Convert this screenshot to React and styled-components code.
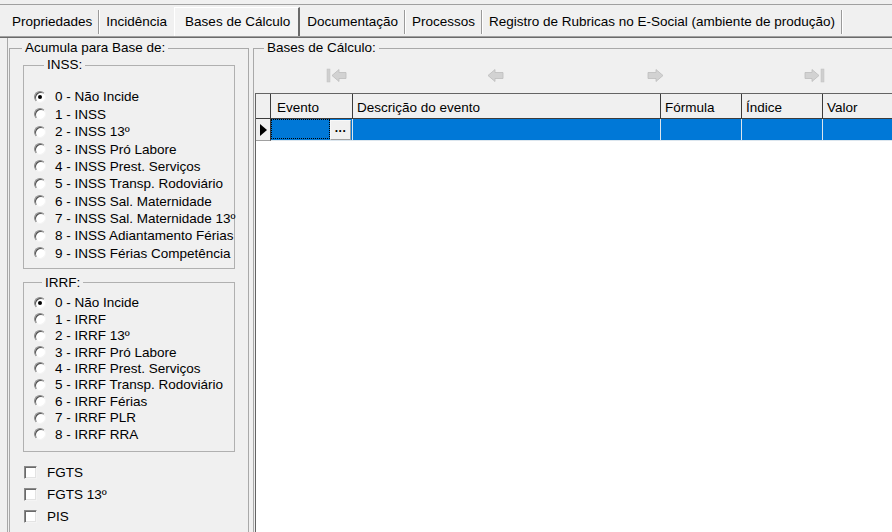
import React from 'react';
import styled, { createGlobalStyle } from 'styled-components';

const Global = createGlobalStyle`
  html, body { margin: 0; padding: 0; background: #f0f0f0; overflow: hidden; }
  body { font-family: "Liberation Sans", Arial, sans-serif; font-size: 13.5px; color: #000; }
  #root { width: 892px; height: 532px; overflow: hidden; }
  * { box-sizing: border-box; }
`;

const Page = styled.div`
  width: 892px;
  height: 532px;
  display: flex;
  flex-direction: column;
  background: #f0f0f0;
  overflow: hidden;
`;

const TopStrip = styled.div`
  height: 5px;
  flex: none;
  border-bottom: 1px solid #a0a0a0;
`;

const TabRow = styled.div`
  display: flex;
  height: 31px;
  flex: none;
  padding: 2px 0 0 5px;
  align-items: stretch;
`;

const Tab = styled.div`
  position: relative;
  display: flex;
  align-items: center;
  white-space: nowrap;
  line-height: 16px;
  padding: ${p => (p.$active ? '0 8px 0 10px' : '0 7px')};
  background: ${p => (p.$active ? '#f3f3f3' : 'transparent')};
  border-top: ${p => (p.$active ? '1px solid #ffffff' : '1px solid transparent')};
  border-left: ${p => (p.$active ? '1px solid #ffffff' : '0')};
  border-right: ${p => (p.$active ? '2px solid #6a6a6a' : '0')};
  &::after {
    content: '';
    display: ${p => (p.$active || p.$noSep ? 'none' : 'block')};
    position: absolute;
    right: 0;
    top: 2px;
    bottom: 2px;
    width: 1px;
    background: #9a9a9a;
    box-shadow: 1px 0 0 #ffffff;
  }
`;

const TabLine = styled.div`
  flex: none;
  height: 2px;
  border-top: 1px solid #a0a0a0;
  border-bottom: 1px solid #6a6a6a;
`;

const Content = styled.div`
  flex: 1;
  display: flex;
  padding-left: 7px;
  min-height: 0;
`;

const LeftPane = styled.div`
  flex: none;
  width: 242px;
  border-left: 1px solid #a8a8a8;
  padding-left: 1px;
`;

const OuterGroup = styled.fieldset`
  margin: 2px 0 0 0;
  padding: 0;
  width: 240px;
  height: 520px;
  border: 1px solid #a9a9a9;
  min-width: 0;
`;

const Legend = styled.legend`
  margin-left: ${p => p.$ml ?? 12}px;
  padding: 0 3px;
  line-height: 16px;
  font-size: 13.5px;
`;

const OptionBox = styled.fieldset`
  margin: ${p => p.$mt}px 13px 0 13px;
  padding: ${p => p.$pt}px 0 ${p => p.$pb}px 10px;
  border: 1px solid #b0b0b0;
  min-width: 0;
`;

const RadioRow = styled.div`
  display: flex;
  align-items: center;
  height: ${p => p.$h}px;
  white-space: nowrap;
`;

const Radio = styled.span`
  position: relative;
  flex: none;
  width: 12px;
  height: 12px;
  margin-right: 9px;
  border-radius: 50%;
  background: #ffffff;
  border: 1px solid;
  border-color: #8a8a8a #f4f4f4 #f4f4f4 #8a8a8a;
  box-shadow: inset 1px 1px 0 #505050;
  &::after {
    content: '';
    display: ${p => (p.$checked ? 'block' : 'none')};
    position: absolute;
    left: 3px;
    top: 3px;
    width: 4px;
    height: 4px;
    border-radius: 50%;
    background: #000;
  }
`;

const CheckList = styled.div`
  margin-top: 10px;
  padding-left: 14px;
`;

const CheckRow = styled.div`
  display: flex;
  align-items: center;
  height: 22px;
  white-space: nowrap;
`;

const CheckBox = styled.span`
  flex: none;
  width: 13px;
  height: 13px;
  margin-right: 10px;
  background: #ffffff;
  border: 1px solid;
  border-color: #8a8a8a #f4f4f4 #f4f4f4 #8a8a8a;
  box-shadow: inset 1px 1px 0 #6a6a6a, inset -1px -1px 0 #e3e3e3;
`;

const RightPane = styled.div`
  flex: none;
  padding-left: 4px;
`;

const RightGroup = styled.fieldset`
  margin: 2px 0 0 0;
  padding: 0;
  width: 680px;
  height: 520px;
  border: 1px solid #a9a9a9;
  min-width: 0;
`;

const NavBar = styled.div`
  display: grid;
  grid-template-columns: repeat(4, 159px);
  height: 37px;
  margin-left: 3px;
`;

const NavButton = styled.div`
  display: flex;
  align-items: center;
  justify-content: center;
  padding-top: 2px;
`;

const Grid = styled.div`
  margin-left: 1px;
  display: grid;
  grid-template-columns: 15px 82px 308px 81px 81px 81px 1fr;
  grid-auto-rows: min-content;
  border-top: 1px solid #646464;
  border-left: 1px solid #646464;
  background: #ffffff;
  height: 480px;
  align-content: start;
`;

const HeadCell = styled.div`
  height: 25px;
  padding: 2px 0 0 ${p => p.$pl ?? 6}px;
  display: flex;
  align-items: center;
  background: #f0f0f0;
  border-right: 1px solid #3c3c3c;
  border-bottom: 1px solid #3c3c3c;
  white-space: nowrap;
`;

const Cell = styled.div`
  position: relative;
  height: 22px;
  background: ${p => (p.$indicator ? '#f0f0f0' : '#0078d7')};
  border-right: 1px solid ${p => (p.$indicator ? '#3c3c3c' : '#dce6ee')};
  border-bottom: 1px solid ${p => (p.$indicator ? '#a0a0a0' : '#dce6ee')};
  display: flex;
  align-items: center;
  justify-content: ${p => (p.$indicator ? 'center' : 'flex-start')};
`;

const FocusCell = styled.div`
  flex: 1;
  align-self: stretch;
  margin: 0 0 1px 0;
  border: 1px dotted #000;
`;

const EllipsisButton = styled.div`
  flex: none;
  width: 21px;
  height: 20px;
  margin-right: 1px;
  background: #f0f0f0;
  border: 1px solid #f8f8f8;
  border-right-color: #a0a0a0;
  border-bottom-color: #a0a0a0;
  display: flex;
  align-items: center;
  justify-content: center;
  font-weight: bold;
  font-size: 12px;
  letter-spacing: 0.5px;
  line-height: 1;
  padding-bottom: 4px;
`;

const ArrowIcon = ({ dir, bar }) => {
  const flip = dir === 'right';
  return (
    <svg width="22" height="15" viewBox="0 0 22 15" style={flip ? { transform: 'scaleX(-1)' } : undefined}>
      {bar && <rect x="1" y="1" width="3" height="13" fill="#cfcfcf" stroke="#c0c0c0" strokeWidth="0.5" />}
      <path
        d={bar ? 'M6 7.5 L13 1.5 L13 4.5 L20 4.5 L20 10.5 L13 10.5 L13 13.5 Z' : 'M3 7.5 L10 1.5 L10 4.5 L18 4.5 L18 10.5 L10 10.5 L10 13.5 Z'}
        fill="#d2d2d2"
        stroke="#bdbdbd"
        strokeWidth="0.8"
        strokeLinejoin="round"
      />
    </svg>
  );
};

const Triangle = () => (
  <svg width="7" height="12" viewBox="0 0 7 12">
    <path d="M0 0 L7 6 L0 12 Z" fill="#000" />
  </svg>
);

const tabs = [
  'Propriedades',
  'Incidência',
  'Bases de Cálculo',
  'Documentação',
  'Processos',
  'Registro de Rubricas no E-Social (ambiente de produção)',
];

const inss = [
  '0 - Não Incide',
  '1 - INSS',
  '2 - INSS 13º',
  '3 - INSS Pró Labore',
  '4 - INSS Prest. Serviços',
  '5 - INSS Transp. Rodoviário',
  '6 - INSS Sal. Maternidade',
  '7 - INSS Sal. Maternidade 13º',
  '8 - INSS Adiantamento Férias',
  '9 - INSS Férias Competência',
];

const irrf = [
  '0 - Não Incide',
  '1 - IRRF',
  '2 - IRRF 13º',
  '3 - IRRF Pró Labore',
  '4 - IRRF Prest. Serviços',
  '5 - IRRF Transp. Rodoviário',
  '6 - IRRF Férias',
  '7 - IRRF PLR',
  '8 - IRRF RRA',
];

const checks = ['FGTS', 'FGTS 13º', 'PIS', ''];

const columns = ['Evento', 'Descrição do evento', 'Fórmula', 'Índice', 'Valor', ''];

export default function App() {
  return (
    <Page>
      <Global />
      <TopStrip />
      <TabRow>
        {tabs.map((t, i) => (
          <Tab key={t} $active={i === 2} $noSep={i === 1}>
            {t}
          </Tab>
        ))}
      </TabRow>
      <TabLine />
      <Content>
        <LeftPane>
          <OuterGroup>
            <Legend $ml={12}>Acumula para Base de:</Legend>
            <OptionBox $mt={1} $pt={15.3} $pb={6.2}>
              <Legend $ml={10}>INSS:</Legend>
              {inss.map((t, i) => (
                <RadioRow key={t} $h={17.35}>
                  <Radio $checked={i === 0} />
                  {t}
                </RadioRow>
              ))}
            </OptionBox>
            <OptionBox $mt={6} $pt={3.8} $pb={8.6}>
              <Legend $ml={8}>IRRF:</Legend>
              {irrf.map((t, i) => (
                <RadioRow key={t} $h={16.4}>
                  <Radio $checked={i === 0} />
                  {t}
                </RadioRow>
              ))}
            </OptionBox>
            <CheckList>
              {checks.map((t, i) => (
                <CheckRow key={i}>
                  <CheckBox />
                  {t}
                </CheckRow>
              ))}
            </CheckList>
          </OuterGroup>
        </LeftPane>
        <RightPane>
          <RightGroup>
            <Legend $ml={10}>Bases de Cálculo:</Legend>
            <NavBar>
              <NavButton><ArrowIcon dir="left" bar /></NavButton>
              <NavButton><ArrowIcon dir="left" /></NavButton>
              <NavButton><ArrowIcon dir="right" /></NavButton>
              <NavButton><ArrowIcon dir="right" bar /></NavButton>
            </NavBar>
            <Grid>
              <HeadCell $pl={0} />
              {columns.map((c, i) => (
                <HeadCell key={i} $pl={i === 0 ? 6 : 4}>{c}</HeadCell>
              ))}
              <Cell $indicator><Triangle /></Cell>
              <Cell>
                <FocusCell />
                <EllipsisButton>...</EllipsisButton>
              </Cell>
              <Cell />
              <Cell />
              <Cell />
              <Cell />
              <Cell />
            </Grid>
          </RightGroup>
        </RightPane>
      </Content>
    </Page>
  );
}
